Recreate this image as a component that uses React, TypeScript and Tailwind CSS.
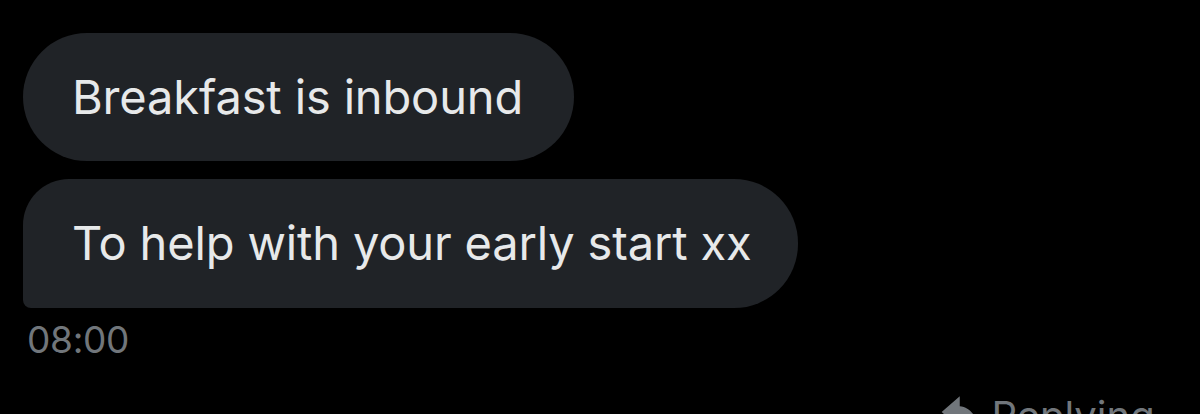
export default function App() {
  return (
    <div className="w-[1200px] h-[414px] bg-black overflow-hidden relative" style={{ fontFamily: 'Inter, "Noto Sans", sans-serif' }}>
      <div className="flex flex-col items-start pl-[23px] pt-[33px]">
        <div className="h-[128px] flex items-center pl-[49px] pr-[51px] rounded-[64px] bg-[#202327] text-[#e7e9ea] text-[47px] tracking-[-0.15px]">
          Breakfast is inbound
        </div>
        <div className="mt-[18px] h-[129px] flex items-center pl-[49px] pr-[46px] rounded-[64px] rounded-tl-[46px] rounded-bl-[8px] bg-[#202327] text-[#e7e9ea] text-[47px] tracking-[-0.15px]">
          To help with your early start xx
        </div>
        <div className="mt-[8px] pl-[4px] text-[#71767b] text-[37px] leading-[48px] tracking-[-0.3px]">08:00</div>
      </div>
      <div className="absolute left-[940px] top-[390px] flex items-start gap-[12px] text-[#71767b]">
        <svg width="40" height="40" viewBox="0 0 24 24" className="mt-[2px]">
          <path fill="#71767b" d="M12 2.5 L1 12 L12 21.5 V15.5 C16 15.5 20 17 23 21 C22 14 18 9 12 8.5 Z" />
        </svg>
        <span className="text-[40px] leading-[48px] mt-[2px]">Replying to</span>
      </div>
    </div>
  );
}
